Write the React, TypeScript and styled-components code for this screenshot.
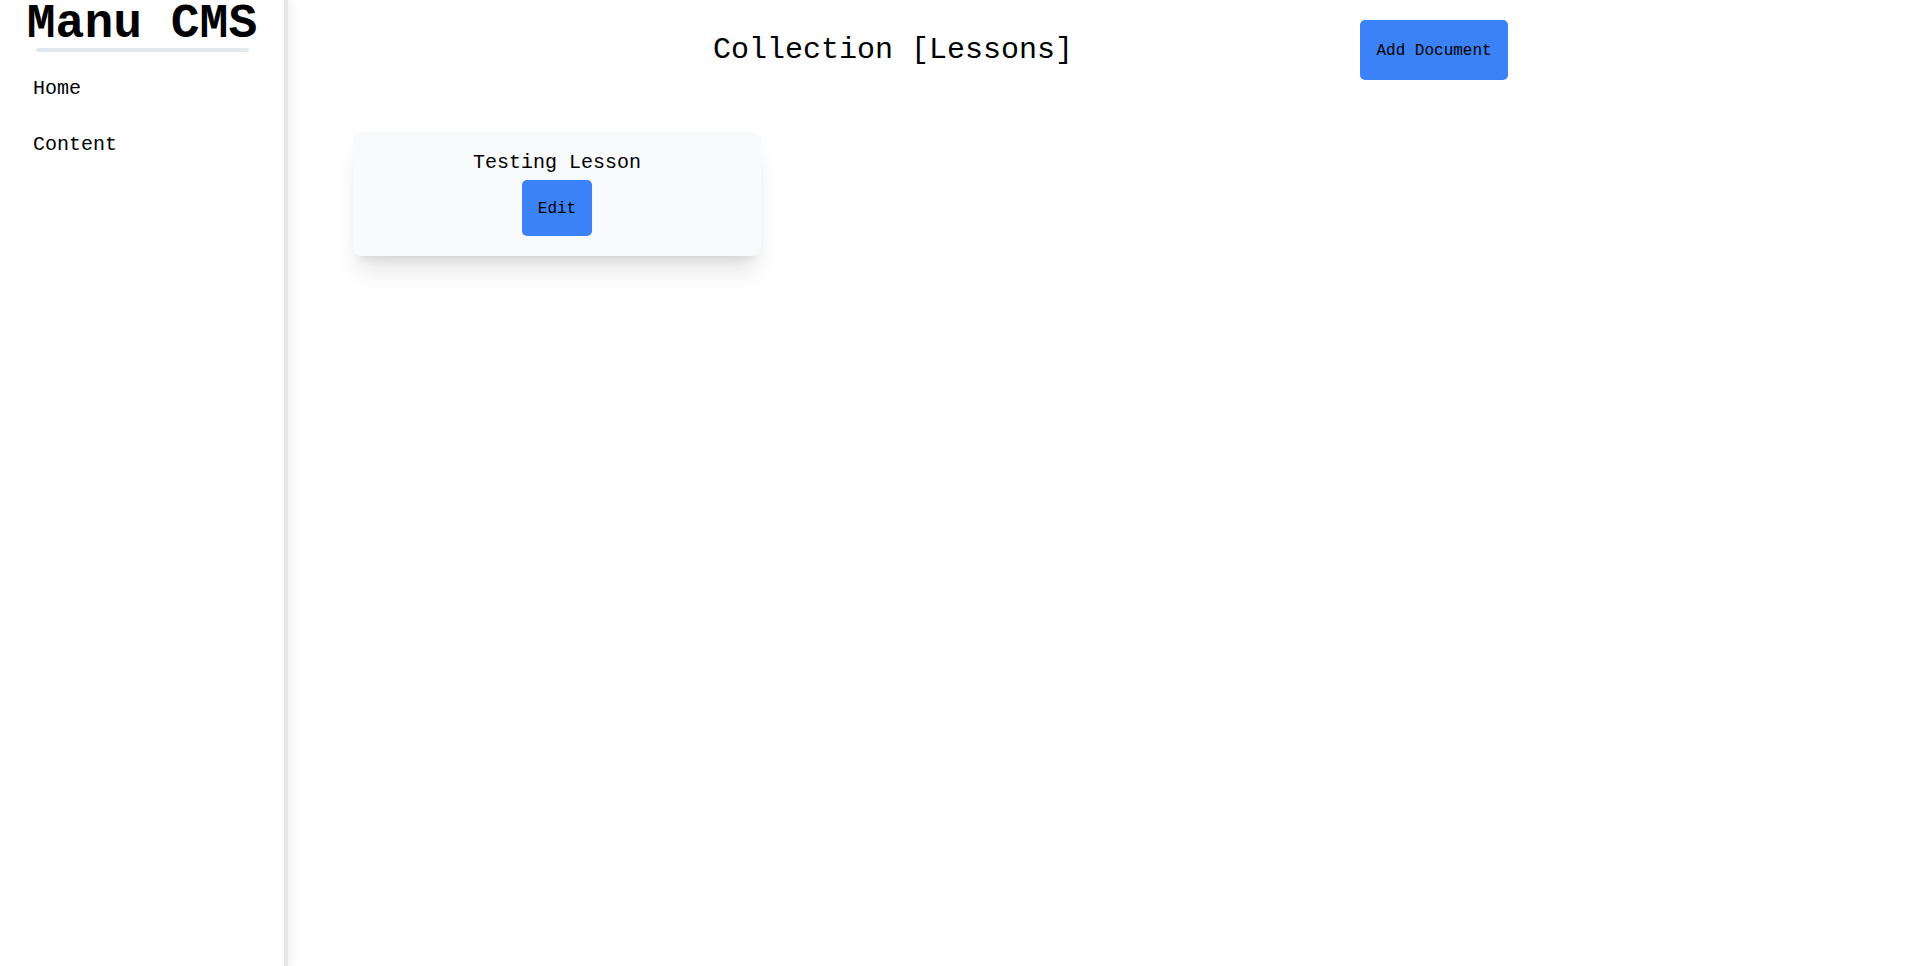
import React from "react";
import styled, { createGlobalStyle } from "styled-components";

const GlobalStyle = createGlobalStyle`
  html, body {
    margin: 0;
    padding: 0;
    background: #ffffff;
    font-family: "Liberation Mono", "DejaVu Sans Mono", monospace;
    color: #000000;
  }
  * { box-sizing: border-box; }
`;

const Page = styled.div`
  display: flex;
  min-height: 100vh;
`;

const Sidebar = styled.aside`
  width: 288px;
  flex-shrink: 0;
  min-height: 100vh;
  border-right: 4px solid #e5e7eb;
  box-shadow: 4px 0 10px rgba(0, 0, 0, 0.06);
  background: #ffffff;
  position: relative;
  z-index: 1;
`;

const Logo = styled.h1`
  margin: 0;
  font-size: 48px;
  line-height: 48px;
  font-weight: 700;
  text-align: center;
  white-space: nowrap;
`;

const LogoRule = styled.div`
  width: 213px;
  height: 4px;
  margin: 0 auto;
  background: #e2e8f0;
  border-radius: 9999px;
`;

const Nav = styled.nav`
  display: flex;
  flex-direction: column;
  padding-top: 9px;
`;

const NavItem = styled.a`
  display: block;
  padding: 14px 33px;
  font-size: 20px;
  line-height: 28px;
  color: #000000;
  text-decoration: none;
  cursor: pointer;
`;

const Main = styled.main`
  flex: 1;
  display: flex;
  flex-direction: column;
`;

const Header = styled.header`
  display: flex;
  align-items: center;
  padding: 20px 0 0 425px;
`;

const Title = styled.h2`
  margin: 0;
  font-size: 30px;
  line-height: 36px;
  font-weight: 400;
  white-space: nowrap;
`;

const Button = styled.button<{ $pt: number; $pb: number }>`
  font-family: inherit;
  font-size: 16px;
  line-height: 24px;
  color: #000000;
  background: #3b82f6;
  border: none;
  border-radius: 5px;
  padding: ${(p) => p.$pt}px 16px ${(p) => p.$pb}px;
  cursor: pointer;
  white-space: nowrap;
`;

const AddButton = styled(Button)`
  margin-left: 287px;
  min-width: 148px;
`;

const CardList = styled.section`
  display: flex;
  flex-wrap: wrap;
  gap: 24px;
  margin: 52px 0 0 65px;
`;

const Card = styled.div`
  width: 408px;
  display: flex;
  flex-direction: column;
  align-items: center;
  gap: 3px;
  padding: 17px 16px 20px;
  background: #f8fafc;
  border-radius: 8px;
  box-shadow: 0 20px 25px -5px rgba(0, 0, 0, 0.1), 0 8px 10px -6px rgba(0, 0, 0, 0.1);
`;

const CardTitle = styled.h3`
  margin: 0;
  font-size: 20px;
  line-height: 28px;
  font-weight: 400;
`;

const lessons = [{ id: 1, title: "Testing Lesson" }];

export default function App() {
  return (
    <>
      <GlobalStyle />
      <Page>
        <Sidebar>
          <Logo>Manu CMS</Logo>
          <LogoRule />
          <Nav>
            <NavItem>Home</NavItem>
            <NavItem>Content</NavItem>
          </Nav>
        </Sidebar>
        <Main>
          <Header>
            <Title>Collection [Lessons]</Title>
            <AddButton $pt={19} $pb={17}>Add Document</AddButton>
          </Header>
          <CardList>
            {lessons.map((l) => (
              <Card key={l.id}>
                <CardTitle>{l.title}</CardTitle>
                <Button $pt={17} $pb={15}>Edit</Button>
              </Card>
            ))}
          </CardList>
        </Main>
      </Page>
    </>
  );
}
